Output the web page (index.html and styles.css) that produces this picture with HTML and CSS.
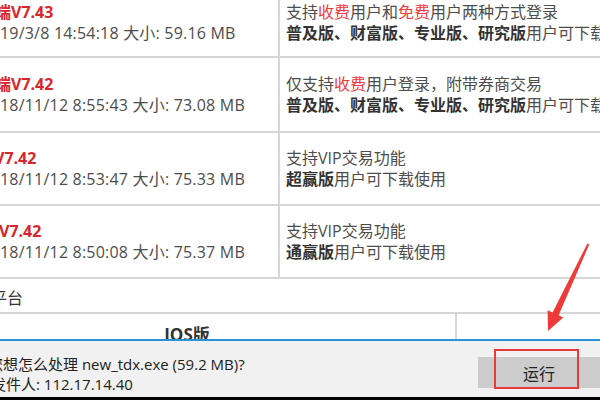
FILE: index.html
```html
<!DOCTYPE html>
<html lang="zh-CN">
<head>
<meta charset="utf-8">
<link rel="stylesheet" href="styles.css">
</head>
<body>
<div class="page">
  <div class="table">
    <div class="row r1">
      <div class="cell left">
        <div class="title t-cut1">端V7.43</div>
        <div class="info">19/3/8 14:54:18 大小: 59.16 MB</div>
      </div>
      <div class="cell right">
        <div>支持<span class="hl">收费</span>用户和<span class="hl">免费</span>用户两种方式登录</div>
        <div><b>普及版、财富版、专业版、研究版</b>用户可下载使用</div>
      </div>
    </div>
    <div class="row r2">
      <div class="cell left">
        <div class="title t-cut1">端V7.42</div>
        <div class="info">18/11/12 8:55:43 大小: 73.08 MB</div>
      </div>
      <div class="cell right">
        <div>仅支持<span class="hl">收费</span>用户登录，附带券商交易</div>
        <div><b>普及版、财富版、专业版、研究版</b>用户可下载使用</div>
      </div>
    </div>
    <div class="row r3">
      <div class="cell left">
        <div class="title t-cut2">V7.42</div>
        <div class="info">18/11/12 8:53:47 大小: 75.33 MB</div>
      </div>
      <div class="cell right">
        <div>支持VIP交易功能</div>
        <div><b>超赢版</b>用户可下载使用</div>
      </div>
    </div>
    <div class="row r4">
      <div class="cell left">
        <div class="title t-cut3">V7.42</div>
        <div class="info">18/11/12 8:50:08 大小: 75.37 MB</div>
      </div>
      <div class="cell right">
        <div>支持VIP交易功能</div>
        <div><b>通赢版</b>用户可下载使用</div>
      </div>
    </div>
    <div class="row head"><span class="head-text">平台</span></div>
    <div class="row ios">
      <div class="cell ios-cell"><b>IOS版</b></div>
      <div class="cell ios-rest"></div>
    </div>
  </div>
  <div class="bar">
    <div class="msg">
      <div class="msg1"><span class="cut-a">您想怎么处理 new_tdx.exe (59.2 MB)?</span></div>
      <div class="msg2"><span class="cut-b">发件人: 112.17.14.40</span></div>
    </div>
    <div class="btn">运行</div>
  </div>
  <div class="bottom"></div>
  <div class="mark"></div>
  <svg class="arrow" width="600" height="400" viewBox="0 0 600 400">
    <polygon fill="#f03a3a" points="587.4,243.4 589.2,244.6 558.6,315.2 563.2,317.4 548,331 547.6,310.2 552.6,312.6"/>
  </svg>
</div>
</body>
</html>
```
FILE: styles.css
```css
* { box-sizing: border-box; }
html, body { margin: 0; padding: 0; }
body {
  width: 600px;
  height: 400px;
  overflow: hidden;
  background: #fff;
  font-family: "Open Sans", "Noto Sans CJK SC", sans-serif;
  font-size: 16px;
  color: #4d4d4d;
}
.page {
  position: relative;
  width: 600px;
  height: 400px;
  overflow: hidden;
  display: flex;
  flex-direction: column;
}
.table {
  height: 339px;
  overflow: hidden;
  flex: none;
}
.row {
  display: flex;
  border-bottom: 2px solid #d6d6d6;
  line-height: 21px;
}
.r1 { height: 58px; padding-bottom: 10px; }
.r2 { height: 75px; }
.r3 { height: 73px; }
.r4 { height: 73px; }
.cell {
  display: flex;
  flex-direction: column;
  justify-content: center;
}
.left {
  width: 280px;
  border-right: 2px solid #d6d6d6;
  overflow: hidden;
  white-space: nowrap;
}
.r1 .left { margin-bottom: -10px; padding-bottom: 10px; }
.right {
  flex: 1;
  padding-left: 6px;
  white-space: nowrap;
  overflow: hidden;
}
.title {
  color: #d9262c;
  font-weight: 700;
}
.t-cut1 { margin-left: -5px; }
.t-cut2 { margin-left: -6px; }
.t-cut3 { margin-left: -1px; }
.info { letter-spacing: 0.2px; }
.hl { color: #f23a3a; }
b { color: #333; font-weight: 700; }
.head {
  height: 35px;
  align-items: center;
  padding-top: 5px;
}
.head-text { margin-left: -9px; color: #333; }
.ios {
  height: 37px;
  border-bottom: none;
}
.ios-cell {
  width: 457px;
  border-right: 2px solid #d6d6d6;
  align-items: center;
  padding-right: 81px;
  padding-top: 4px;
  font-size: 17px;
}
.ios-rest { flex: 1; }
.bar {
  flex: none;
  height: 58px;
  border-top: 2px solid #2a93d5;
  background: #f1f1f1;
  display: flex;
  align-items: flex-start;
  color: #222;
}
.msg {
  padding-top: 13px;
  line-height: 20px;
  white-space: nowrap;
  font-size: 15px;
}
.cut-a { margin-left: -12px; }
.cut-b { margin-left: -9px; }
.btn {
  margin-left: auto;
  margin-top: 16px;
  width: 122px;
  height: 31px;
  background: #cccccc;
  display: flex;
  align-items: center;
  justify-content: center;
  color: #222;
  font-family: "Noto Sans CJK SC", sans-serif;
}
.bottom {
  flex: none;
  height: 3px;
  background: #000;
}
.mark {
  position: absolute;
  left: 494px;
  top: 349px;
  width: 85px;
  height: 40px;
  border: 2px solid #e83c3c;
}
.arrow {
  position: absolute;
  left: 0;
  top: 0;
}
```
